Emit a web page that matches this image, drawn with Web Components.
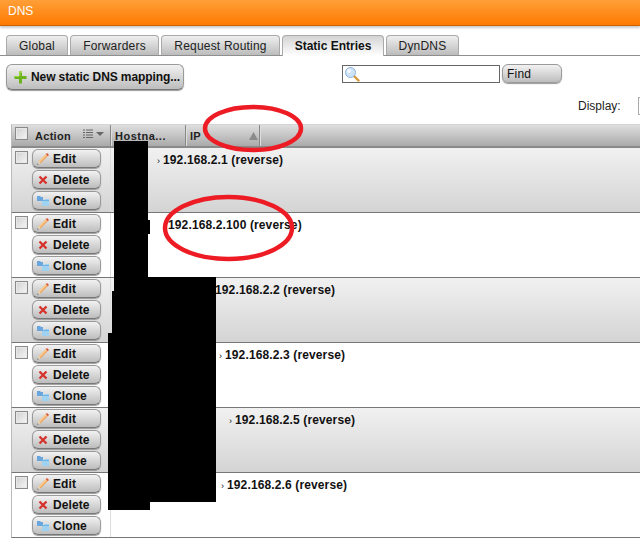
<!DOCTYPE html>
<html lang="en"><head><meta charset="utf-8"><title>DNS</title>
<style>
html,body{margin:0;padding:0;background:#fff;width:640px;height:556px;overflow:hidden}
body{font:12px "Liberation Sans",Arial,sans-serif;color:#111;position:relative}
dns-page{display:block}
</style></head><body>
<dns-page>
  <title-bar>DNS</title-bar>
  <tab-strip>
    <tab-item style="--w:62px">Global</tab-item>
    <tab-item style="--w:89px">Forwarders</tab-item>
    <tab-item style="--w:119px">Request Routing</tab-item>
    <tab-item active style="--w:102px">Static Entries</tab-item>
    <tab-item style="--w:73px">DynDNS</tab-item>
  </tab-strip>
  <tool-bar></tool-bar>
  <display-row></display-row>
  <grid-head></grid-head>
  <grid-row indent="52" ip="192.168.2.1"></grid-row>
  <grid-row even indent="57" ip="192.168.2.100" noarrow></grid-row>
  <grid-row indent="104" ip="192.168.2.2" noarrow></grid-row>
  <grid-row even indent="114" ip="192.168.2.3"></grid-row>
  <grid-row indent="124" ip="192.168.2.5"></grid-row>
  <grid-row even indent="116" ip="192.168.2.6"></grid-row>
</dns-page>
<mark-ups></mark-ups>

<script>
const ICONS={
 plus:'<svg width="13" height="13" viewBox="0 0 13 13"><path d="M5 .5h3v4.500h4.500v3H8v4.500H5V8H.5V5H5z" fill="#6cb21f"/><path d="M5 .5h3v1.500H6.500v3H.5v1H5z" fill="#9ad63f"/></svg>',
 edit:'<svg width="14" height="14" viewBox="0 0 14 14"><path d="M11 1l2 2-1.300 1.300-2-2z" fill="#d8553a"/><path d="M9.700 2.300l2 2-7.200 7.200-2-2z" fill="#f0a860"/><path d="M9.700 2.300l1 1-7.200 7.200-1-1z" fill="#f6cf9c"/><path d="M2.500 9.500l2 2-3.300 1.300z" fill="#e6d6bd"/><path d="M1.200 12.800l.6-1.600 1 1z" fill="#555"/></svg>',
 del:'<svg width="10" height="10" viewBox="0 0 10 10"><path d="M1.500 1.500l7 7M8.500 1.500l-7 7" stroke="#d5322a" stroke-width="2.300" fill="none"/></svg>',
 clone:'<svg width="14" height="12" viewBox="0 0 14 12"><path d="M1 1h3l1 1h2v4H1z" fill="#6aa6de"/><path d="M6 5h2l1-1h4v7H6z" fill="#9fd2f1"/><path d="M6 5h7v1H6z" fill="#6db3e6"/></svg>'
};
function def(name,css,html,init){
  customElements.define(name,class extends HTMLElement{
    connectedCallback(){
      if(this.shadowRoot)return;
      const r=this.attachShadow({mode:'open'});
      r.innerHTML='<style>'+css+'</style>'+(typeof html==='function'?html(this):html);
    }
  });
}
def('ui-button',`:host{display:block;box-sizing:border-box;height:var(--h,19px);width:var(--bw,69px);border:1px solid #9a9a9a;border-bottom-color:#777;border-radius:6px;background:linear-gradient(#f2f2f2,#bdbdbd);box-shadow:0 1px 1px #999;font:bold 12px "Liberation Sans",Arial,sans-serif;letter-spacing:var(--ls,.1px);color:#111}
 .b{display:flex;align-items:center;height:100%;padding-left:var(--pl,3px);gap:var(--g,3px);white-space:nowrap}
 .i{display:flex;width:var(--iw,14px);justify-content:center}`,
 el=>`<div class="b"><span class="i">${ICONS[el.getAttribute('icon')]||''}</span><slot></slot></div>`);
def('check-box',`:host{display:block;box-sizing:border-box;width:13px;height:13px;border:1px solid #8a8a8a;background:linear-gradient(135deg,#d0d0d0,#f6f6f6);box-shadow:inset 0 0 0 1px #e8e8e8}`,'');
def('title-bar',`:host{display:block;box-sizing:border-box;height:26px;padding:4px 0 0 8px;background:linear-gradient(#ff9f38,#ff7a00);border-bottom:1px solid #c96200;box-shadow:0 2px 2px #ccc;color:#fff;font:12px "Liberation Sans",Arial,sans-serif;line-height:15px}`,'<slot></slot>');
def('tab-strip',`:host{display:flex;box-sizing:border-box;height:21px;margin-top:9px;padding-left:6px;gap:2px;border-bottom:1px solid #8f8f8f}`,'<slot></slot>');
def('tab-item',`:host{display:flex;box-sizing:border-box;width:var(--w);height:20px;align-items:center;justify-content:center;border:1px solid #aaa;border-bottom:0;border-radius:4px 4px 0 0;background:linear-gradient(#efefef,#bcbcbc);font:12px "Liberation Sans",Arial,sans-serif;letter-spacing:.2px;color:#222}
 :host([active]){height:21px;background:linear-gradient(#d4d4d4,#fff);font-weight:bold;letter-spacing:0;color:#111;z-index:1}`,'<slot></slot>');
def('tool-bar',`:host{display:flex;box-sizing:border-box;height:41px;padding:8px 0 0 6px;align-items:flex-start}
 ui-button.new{--h:26px;--bw:178px;--pl:6px;--g:4px;--iw:14px;--ls:-.1px}
 .s{display:flex;box-sizing:border-box;width:158px;height:18px;margin:1px 0 0 158px;border:1px solid #666;background:#fff;padding:0 0 0 1px;align-items:center}
 .f{margin-left:2px;box-sizing:border-box;height:19px;width:60px;border:1px solid #9a9a9a;border-radius:6px;background:linear-gradient(#f2f2f2,#bdbdbd);box-shadow:0 1px 1px #999;font:12px "Liberation Sans",Arial,sans-serif;letter-spacing:.2px;padding:2px 0 0 4px;color:#111}`,
 `<ui-button class="new" icon="plus">New static DNS mapping...</ui-button>
  <div class="s"><svg width="16" height="16" viewBox="0 0 16 16"><path d="M9.500 9.500l5 5" stroke="#d99a3a" stroke-width="2.400" stroke-linecap="round"/><circle cx="6.500" cy="6.500" r="5" fill="#cfe3f7" stroke="#8fb2d8"/><circle cx="5" cy="5" r="2" fill="#f3f9ff"/></svg></div>
  <div class="f">Find</div>`);
def('display-row',`:host{display:flex;box-sizing:border-box;height:27px;padding-left:578px;font:12px "Liberation Sans",Arial,sans-serif;color:#222;overflow:hidden}
 .t{flex:none;width:60px;padding-top:2px;line-height:15px}.x{flex:none;box-sizing:border-box;width:20px;height:18px;margin-top:0;border:1px solid #aaa;background:#fff}`,
 '<div class="t">Display:</div><div class="x"></div>');
def('grid-head',`:host{display:flex;box-sizing:border-box;height:24px;margin-left:11px;border-top:1px solid #d4d4d4;border-bottom:2px solid #8a8a8a;border-left:1px solid #bbb;background:linear-gradient(#dedede,#aaa);font:bold 11px "Liberation Sans",Arial,sans-serif;color:#222;letter-spacing:.3px}
 .c{box-sizing:border-box;border-right:1px solid #888;box-shadow:1px 0 0 #ddd;height:100%;display:flex;align-items:center}
 .a{width:99px;padding-left:3px}.h{width:75px;padding-left:4px;letter-spacing:.5px}.i{width:74px;padding-left:4px}
 check-box{margin:-4px 7px 0 0}
 .m{margin-left:12px;display:flex;gap:3px;align-items:center;margin-top:-3px}
 .u{margin-left:auto;margin-right:1px}`,
 `<div class="c a"><check-box></check-box>Action<span class="m"><svg width="10" height="10" viewBox="0 0 10 10"><path d="M0 1h2M3 1h7M0 3.500h2M3 3.500h7M0 6h2M3 6h7M0 8.500h2M3 8.500h7" stroke="#666"/></svg><svg width="8" height="4" viewBox="0 0 8 4"><path d="M0 0h8L4 4z" fill="#666"/></svg></span></div>
  <div class="c h">Hostna...</div>
  <div class="c i">IP<svg class="u" width="9" height="8" viewBox="0 0 9 8"><path d="M4.500 0L9 8H0z" fill="#8a8a8a"/></svg></div>`);
def('grid-row',`:host{display:flex;box-sizing:border-box;height:65px;margin-left:11px;border-left:1px solid #bbb;border-bottom:1px solid #777;background:linear-gradient(#f1f1f1,#d4d4d4)}
 :host([even]){background:#fff}
 .a{box-sizing:border-box;width:99px;height:100%;display:flex;padding:0 0 0 3px;gap:4px;border-right:1px solid #ddd}
 check-box{margin-top:3px}
 .b{display:flex;flex-direction:column;gap:2px;padding-top:1px}
 .n{flex:1;padding-top:5px;font:bold 12px "Liberation Sans",Arial,sans-serif;letter-spacing:.13px;line-height:15px;color:#111;white-space:nowrap}
 .ar{display:inline-block;width:6px;font-weight:normal;font-size:9px}`,
 el=>`<div class="a"><check-box></check-box><div class="b"><ui-button icon="edit">Edit</ui-button><ui-button icon="del">Delete</ui-button><ui-button icon="clone">Clone</ui-button></div></div>
 <div class="n" style="padding-left:${+el.getAttribute('indent')-(el.hasAttribute('noarrow')?0:6)}px">${el.hasAttribute('noarrow')?'':'<span class="ar">›</span>'}${el.getAttribute('ip')} (reverse)</div>`);
def('mark-ups',`:host{position:absolute;left:0;top:0;width:640px;height:556px;display:block;pointer-events:none}
 i{position:absolute;background:#000}
 svg{position:absolute;left:0;top:0}`,
 `<i style="left:114px;top:141px;width:34px;height:136px"></i>
  <i style="left:148px;top:220px;width:2px;height:14px"></i>
  <i style="left:114px;top:277px;width:102px;height:14px"></i>
  <i style="left:112px;top:291px;width:104px;height:42px"></i>
  <i style="left:108px;top:333px;width:108px;height:169px"></i>
  <i style="left:108px;top:502px;width:42px;height:8px"></i>
  <svg width="640" height="556"><ellipse cx="253" cy="128.500" rx="48" ry="21.500" fill="none" stroke="#ed1c24" stroke-width="4.500"/><ellipse cx="228.500" cy="228" rx="63.500" ry="31" fill="none" stroke="#ed1c24" stroke-width="4.500"/></svg>`);
def('dns-page',':host{display:block}','<slot></slot>');
</script>
</body></html>
